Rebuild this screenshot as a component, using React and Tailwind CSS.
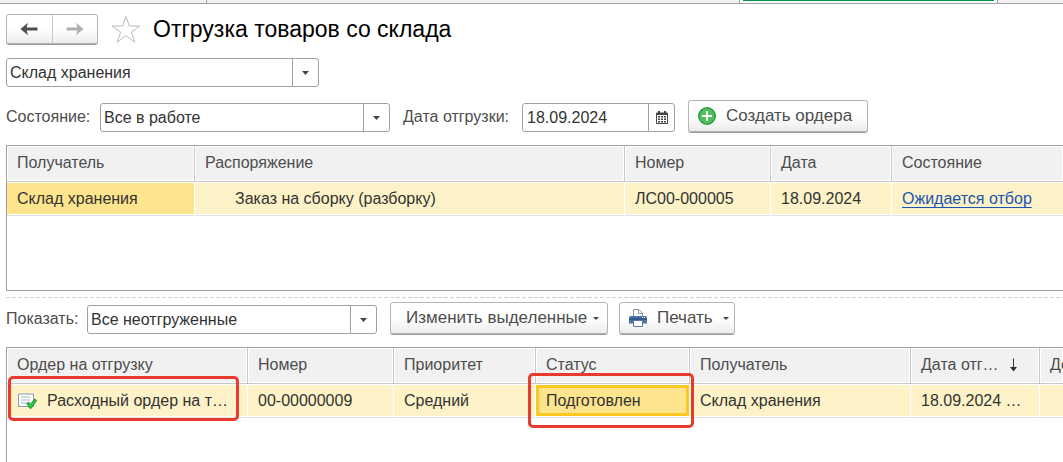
import React from "react";

function Caret() {
  return (
    <svg className="shrink-0" width="7" height="4" viewBox="0 0 7 4" aria-hidden="true">
      <path d="M0 0h7L3.5 4z" fill="#444" />
    </svg>
  );
}

function SmallCaret() {
  return (
    <svg className="ml-auto shrink-0" width="6" height="3" viewBox="0 0 6 3" aria-hidden="true">
      <path d="M0 0h6L3 3z" fill="#444" />
    </svg>
  );
}

function Combo({ id, label, value, className }) {
  return (
    <div className={"grid h-[29px] rounded-[3px] border border-[#a0a0a0] bg-white " + className}>
      <select
        id={id}
        aria-label={label}
        defaultValue={value}
        className="col-start-1 row-start-1 w-full min-w-0 appearance-none bg-transparent pr-7 pl-[3px] text-base leading-6 text-[#333] outline-none"
      >
        <option>{value}</option>
      </select>
      <span className="pointer-events-none col-start-1 row-start-1 flex w-[26px] items-center justify-center justify-self-end border-l border-[#a0a0a0]">
        <Caret />
      </span>
    </div>
  );
}

function ToolButton({ children, className }) {
  return (
    <button
      type="button"
      className={
        "flex h-8 items-center rounded-[3px] border border-[#b4b4b4] bg-linear-to-b from-white from-50% to-[#ececec] text-[17px] leading-6 whitespace-nowrap text-[#4d4d4d] shadow-[0_1px_0_#9a9a9a] " +
        className
      }
    >
      {children}
    </button>
  );
}

function ArrowLeft({ color, flip }) {
  return (
    <svg className={flip ? "-scale-x-100" : ""} width="18" height="14" viewBox="0 0 18 14" aria-hidden="true">
      <path d="M0.5 7L8 0.8 6.6 5.4H17.5V8.6H6.6L8 13.2z" fill={color} />
    </svg>
  );
}

function Star() {
  return (
    <svg width="30" height="29" viewBox="0 0 30 29" aria-hidden="true">
      <path
        d="M15 1.5L18.3 11H28.8L20.4 17 23.9 27.3 15 20.7 6.1 27.3 9.6 17 1.2 11H11.7z"
        fill="#fff"
        stroke="#b5bcc4"
        strokeWidth="1"
      />
    </svg>
  );
}

function CalendarIcon() {
  return (
    <svg width="12" height="13" viewBox="0 0 12 13" aria-hidden="true">
      <path
        d="M1 1.500h1V0h2v1.500h4V0h2v1.500h1a1 1 0 0 1 1 1V12a1 1 0 0 1-1 1H1a1 1 0 0 1-1-1V2.500a1 1 0 0 1 1-1z"
        fill="#444"
      />
      <path d="M1 4h10v8H1z" fill="#fff" />
      <path d="M2 5h2v1.500H2zM5 5h2v1.500H5zM8 5h2v1.500H8zM2 7.500h2V9H2zM5 7.500h2V9H5zM8 7.500h2V9H8zM2 10h2v1.500H2zM5 10h2v1.500H5zM8 10h2v1.500H8z" fill="#444" />
    </svg>
  );
}

function PlusIcon() {
  return (
    <svg className="shrink-0" width="18" height="18" viewBox="0 0 18 18" aria-hidden="true">
      <circle cx="9" cy="9" r="8.3" fill="#4cc05c" stroke="#2b9a45" strokeWidth="1.4" />
      <path d="M9 4v10M4 9h10" stroke="#fff" strokeWidth="2" />
    </svg>
  );
}

function PrinterIcon() {
  return (
    <svg className="shrink-0" width="18" height="18" viewBox="0 0 18 18" aria-hidden="true">
      <path d="M4.500 8V0.500H10L13.500 4V8z" fill="#fff" stroke="#8497ad" />
      <path d="M9.500 0.500V4.500h4" fill="none" stroke="#8497ad" />
      <path d="M1 7h16l1 1.500V14.500H0V8.500z" fill="#4a74a5" />
      <path d="M0 9h18v2H0z" fill="#335b8a" />
      <path d="M13 8h1v1h-1zM15 8h1v1h-1z" fill="#fff" />
      <path d="M4.500 11.500h9v6h-9z" fill="#fff" stroke="#5c7796" />
    </svg>
  );
}

function PostedDocIcon() {
  return (
    <svg className="shrink-0" width="20" height="16" viewBox="0 0 20 16" aria-hidden="true">
      <path d="M1.500 1h15v12.500h-15z" fill="#fbfcfd" stroke="#8c9bab" />
      <path d="M4 4h9M4 7h9M4 10h6" stroke="#a9b6c6" />
      <path
        d="M9.800 10.600l2-1.400 1.900 2L17.700 6l1.900 1.400L14.200 15.300h-1.400z"
        fill="#2cc944"
        stroke="#0c8a26"
        strokeWidth="0.9"
      />
    </svg>
  );
}

function Th({ children }) {
  return (
    <th
      scope="col"
      className="h-9 overflow-hidden border-r border-b border-[#c8c8c8] bg-[#f1f1f1] px-[10px] pt-0 pb-[2px] text-left font-normal whitespace-nowrap text-[#4d4d4d] shadow-[inset_0_0_0_1px_#fff] last:border-r-0"
    >
      {children}
    </th>
  );
}

const cell =
  "relative h-[34px] border-r border-b border-r-white border-b-[#e2e2e2] p-0 px-[10px] whitespace-nowrap text-[#333] shadow-[inset_0_1px_0_#fff,inset_0_-1px_0_#fff] last:border-r-0 ";

export default function App() {
  return (
    <div className="flex min-h-screen flex-col overflow-hidden bg-white font-['Liberation_Sans',Arial,sans-serif] text-base leading-6">
      <div className="flex h-1 border-b border-[#a0a0a0] bg-[#f1f1f1]">
        <div className="w-[207px] border-r border-[#a0a0a0]" />
        <div className="w-[533px] border-r border-[#a0a0a0]" />
        <div className="w-[258px] border-r border-[#a0a0a0] bg-white px-[3px]">
          <div className="h-px bg-[#079247]" />
        </div>
      </div>

      <main className="flex flex-1 flex-col pt-[10px] pl-[6px]">
        <header className="flex h-[30px] items-center">
          <div className="flex h-[30px] w-[92px] rounded-[3px] border border-[#b4b4b4] bg-linear-to-b from-white from-50% to-[#ececec] shadow-[0_1px_0_#9a9a9a]">
            <button type="button" aria-label="Назад" className="flex flex-1 items-center justify-center border-r border-[#c8c8c8]">
              <ArrowLeft color="#4d4d4d" />
            </button>
            <button type="button" aria-label="Вперёд" className="flex flex-1 items-center justify-center">
              <ArrowLeft color="#b0b0b0" flip />
            </button>
          </div>
          <button type="button" aria-label="Избранное" className="ml-[13px]">
            <Star />
          </button>
          <h1 className="ml-3 text-[23px] leading-7 text-black">Отгрузка товаров со склада</h1>
        </header>

        <Combo id="warehouse" label="Склад" value="Склад хранения" className="mt-[14px] w-[313px]" />

        <div className="mt-[13px] flex items-end">
          <label htmlFor="state" className="w-[94px] pb-[3px] text-[#4d4d4d]">Состояние:</label>
          <Combo id="state" value="Все в работе" className="w-[290px]" />
          <label htmlFor="ship-date" className="ml-[13px] w-[119px] pb-[3px] text-[#4d4d4d]">Дата отгрузки:</label>
          <div className="flex h-[29px] w-[153px] rounded-[3px] border border-[#a0a0a0]">
            <input
              id="ship-date"
              type="text"
              defaultValue="18.09.2024"
              className="min-w-0 flex-1 bg-transparent pl-1 text-base leading-6 text-[#333] outline-none"
            />
            <button type="button" aria-label="Выбрать дату" className="flex w-[26px] items-center justify-center border-l border-[#a0a0a0]">
              <CalendarIcon />
            </button>
          </div>
          <ToolButton className="ml-[13px] w-[180px] gap-[10px] pl-[9px]">
            <PlusIcon />
            Создать ордера
          </ToolButton>
        </div>

        <div className="mt-[13px] min-h-[146px] border border-r-0 border-[#a0a0a0]">
          <table className="w-full table-fixed border-separate border-spacing-0">
            <colgroup>
              <col className="w-[188px]" />
              <col className="w-[430px]" />
              <col className="w-[146px]" />
              <col className="w-[121px]" />
              <col />
            </colgroup>
            <thead>
              <tr>
                <Th>Получатель</Th>
                <Th>Распоряжение</Th>
                <Th>Номер</Th>
                <Th>Дата</Th>
                <Th>Состояние</Th>
              </tr>
            </thead>
            <tbody>
              <tr className="bg-[#fdf2c8]">
                <td className={cell + "bg-[#fde48d]"}>Склад хранения</td>
                <td className={cell}><span className="pl-[30px]">Заказ на сборку (разборку)</span></td>
                <td className={cell}>ЛС00-000005</td>
                <td className={cell}>18.09.2024</td>
                <td className={cell}>
                  <a href="#order" className="text-[#1a55b0] underline decoration-1 underline-offset-3 [text-decoration-skip-ink:none]">Ожидается отбор</a>
                </td>
              </tr>
            </tbody>
          </table>
        </div>

        <div className="mt-[6px] h-px bg-[repeating-linear-gradient(90deg,#d4d4d4_0_4px,transparent_4px_6px)]" />

        <div className="mt-1 flex items-end">
          <label htmlFor="show" className="w-[81px] pb-[3px] text-[#4d4d4d]">Показать:</label>
          <Combo id="show" value="Все неотгруженные" className="w-[290px]" />
          <ToolButton className="ml-[13px] w-[218px] pr-2 pl-[15px]">
            Изменить выделенные
            <SmallCaret />
          </ToolButton>
          <ToolButton className="ml-[11px] w-[116px] gap-[10px] pr-2 pl-[9px]">
            <PrinterIcon />
            Печать
            <SmallCaret />
          </ToolButton>
        </div>

        <div className="mt-[13px] flex-1 border-t border-l border-[#a0a0a0]">
          <table className="w-full table-fixed border-separate border-spacing-0">
            <colgroup>
              <col className="w-[241px]" />
              <col className="w-[146px]" />
              <col className="w-[142px]" />
              <col className="w-[154px]" />
              <col className="w-[221px]" />
              <col className="w-[129px]" />
              <col />
            </colgroup>
            <thead>
              <tr>
                <Th>Ордер на отгрузку</Th>
                <Th>Номер</Th>
                <Th>Приоритет</Th>
                <Th>Статус</Th>
                <Th>Получатель</Th>
                <Th>
                  <span className="flex items-center gap-[10px]">
                    Дата отг…
                    <svg width="9" height="14" viewBox="0 0 9 14" aria-hidden="true">
                      <path d="M4.500 0.500V12" stroke="#333" />
                      <path d="M1 9h7l-3.500 4.500z" fill="#333" />
                    </svg>
                  </span>
                </Th>
                <Th>До</Th>
              </tr>
            </thead>
            <tbody>
              <tr className="bg-[#fdf2c8]">
                <td className={cell}>
                  <span className="flex items-center gap-[10px]">
                    <PostedDocIcon />
                    Расходный ордер на т…
                  </span>
                  <span className="pointer-events-none absolute top-[-8px] right-[8px] bottom-[-4px] left-px z-10 rounded-[5px] border-3 border-[#e83b30]" />
                </td>
                <td className={cell}>00-00000009</td>
                <td className={cell}>Средний</td>
                <td className={cell}>
                  <span className="absolute inset-x-0 inset-y-px border-3 border-[#fcc81f] bg-[#fde48d]" />
                  <span className="relative">Подготовлен</span>
                  <span className="pointer-events-none absolute -top-[11px] -right-[5px] -bottom-[11px] -left-2 z-10 rounded-[5px] border-3 border-[#e83b30]" />
                </td>
                <td className={cell}>Склад хранения</td>
                <td className={cell}>18.09.2024 …</td>
                <td className={cell} />
              </tr>
            </tbody>
          </table>
        </div>
      </main>
    </div>
  );
}
